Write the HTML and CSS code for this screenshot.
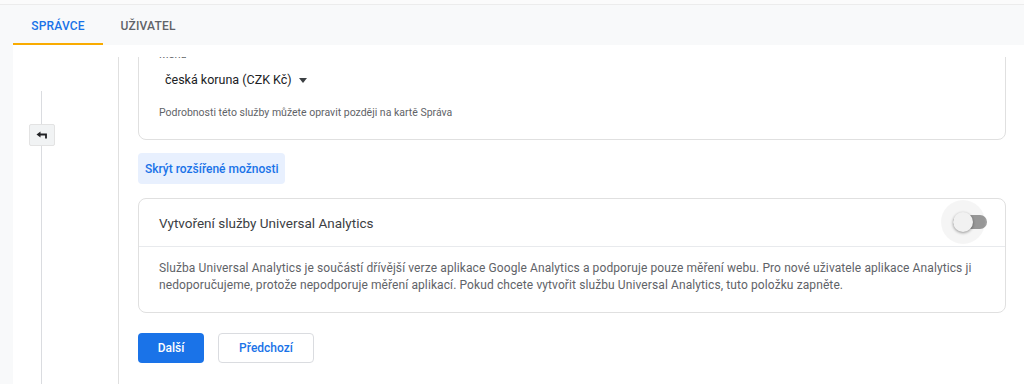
FILE: index.html
```html
<!DOCTYPE html>
<html lang="cs">
<head>
    <meta charset="UTF-8">
    <meta name="viewport" content="width=device-width, initial-scale=1.0">
    <title>Správce</title>
    <link rel="icon" href="data:,">
    <link rel="stylesheet" href="styles.css">
</head>
<body>
    <div class="topline"></div>
    <div class="tabs">
        <div class="tab active">SPRÁVCE</div>
        <div class="tab">UŽIVATEL</div>
    </div>
    <div class="panel">
        <div class="steps">
            <div class="step-line short"></div>
            <button class="back-btn" title="Zpět">
                <svg width="12" height="9" viewBox="0 0 12 9">
                    <path d="M4.5 0.5 L0.5 3.5 L4.5 6.5 Z" fill="#202124"/>
                    <path d="M3 3.5 H10 V7.5" fill="none" stroke="#202124" stroke-width="1.8"/>
                </svg>
            </button>
            <div class="step-line"></div>
        </div>
        <div class="content">
            <div class="card card-top">
                <div class="field-label">Měna</div>
                <div class="select">česká koruna (CZK Kč) <span class="caret"></span></div>
                <div class="hint">Podrobnosti této služby můžete opravit později na kartě Správa</div>
            </div>
            <button class="btn-tonal">Skrýt rozšířené možnosti</button>
            <div class="card card-ua">
                <div class="card-head">
                    <span>Vytvoření služby Universal Analytics</span>
                    <div class="toggle">
                        <div class="track"></div>
                        <div class="halo"></div>
                        <div class="thumb"></div>
                    </div>
                </div>
                <div class="card-body">
                    Služba Universal Analytics je součástí dřívější verze aplikace Google Analytics a podporuje pouze měření webu. Pro nové uživatele aplikace Analytics ji nedoporučujeme, protože nepodporuje měření aplikací. Pokud chcete vytvořit službu Universal Analytics, tuto položku zapněte.
                </div>
            </div>
            <div class="actions">
                <button class="btn-primary">Další</button>
                <button class="btn-outline">Předchozí</button>
            </div>
        </div>
    </div>
</body>
</html>
```
FILE: styles.css
```css
body {
    margin: 0;
    font-family: Roboto, "Noto Sans", Arial, sans-serif;
    background-color: #f8f9fa;
    color: #3c4043;
    height: 384px;
    overflow: hidden;
    display: flex;
    flex-direction: column;
}
.topline {
    height: 4px;
    background-color: #fbfbfb;
    border-bottom: 1px solid #ececec;
}
.tabs {
    display: flex;
    padding-left: 13px;
    height: 40px;
}
.tab {
    width: 90px;
    display: flex;
    align-items: center;
    justify-content: center;
    font-size: 12px;
    font-weight: 500;
    color: #5f6368;
    letter-spacing: 0.2px;
    box-sizing: border-box;
    border-bottom: 2px solid transparent;
    padding-top: 4px;
}
.tab.active {
    color: #1a73e8;
    border-bottom-color: #f9ab00;
}
.panel {
    flex: 1;
    margin-left: 13px;
    background-color: #fff;
    display: flex;
    min-height: 0;
}
.steps {
    width: 105px;
    display: flex;
    flex-direction: column;
    align-items: flex-start;
    padding-top: 46px;
    padding-left: 16px;
    box-sizing: border-box;
}
.step-line {
    width: 1px;
    background-color: #dadce0;
    margin-left: 12px;
    flex: 1;
}
.step-line.short {
    flex: none;
    height: 33px;
}
.back-btn {
    width: 26px;
    height: 22px;
    padding: 0;
    border: 1px solid #e3e3e3;
    border-radius: 2px;
    background-color: #f1f3f4;
    display: flex;
    align-items: center;
    justify-content: center;
}
.content {
    flex: 1;
    margin-top: 12px;
    border-left: 1px solid #e0e0e0;
    padding: 0 18px 0 19px;
    overflow: hidden;
}
.card {
    border: 1px solid #e0e0e0;
    border-radius: 8px;
    background-color: #fff;
}
.card-top {
    margin-top: -30px;
    padding: 20px 20px 18px;
}
.field-label {
    font-size: 11px;
    line-height: 14px;
    color: #5f6368;
}
.select {
    font-size: 12.5px;
    line-height: 20px;
    margin-top: 8px;
    padding-left: 6px;
    color: #202124;
    display: flex;
    align-items: center;
    gap: 7px;
}
.caret {
    width: 0;
    height: 0;
    border-left: 4.5px solid transparent;
    border-right: 4.5px solid transparent;
    border-top: 5px solid #3c4043;
}
.hint {
    font-size: 10.5px;
    line-height: 16px;
    margin-top: 15px;
    color: #5f6368;
}
.btn-tonal {
    margin-top: 13px;
    height: 31px;
    padding: 0 7px;
    border: none;
    border-radius: 4px;
    background-color: #e8f0fe;
    color: #1a73e8;
    font-family: Roboto, Arial, sans-serif;
    font-size: 12px;
    font-weight: 500;
    display: block;
}
.card-ua {
    margin-top: 14px;
}
.card-head {
    height: 47px;
    display: flex;
    align-items: center;
    justify-content: space-between;
    padding: 0 18px 0 20px;
    border-bottom: 1px solid #e8eaed;
    font-size: 13.5px;
    color: #3c4043;
}
.toggle {
    position: relative;
    width: 34px;
    height: 20px;
    margin-top: -2px;
}
.track {
    position: absolute;
    left: 0;
    top: 3px;
    width: 34px;
    height: 14px;
    border-radius: 7px;
    background-color: #9e9e9e;
}
.halo {
    position: absolute;
    left: -12px;
    top: -12px;
    width: 44px;
    height: 44px;
    border-radius: 50%;
    background-color: rgba(0, 0, 0, 0.04);
}
.thumb {
    position: absolute;
    left: 0;
    top: 0;
    width: 20px;
    height: 20px;
    border-radius: 50%;
    background-color: #f1f1f1;
    box-shadow: 0 1px 3px rgba(0, 0, 0, 0.4);
}
.card-body {
    padding: 13px 20px 18px;
    font-size: 12px;
    line-height: 17px;
    letter-spacing: 0.1px;
    color: #5f6368;
}
.actions {
    display: flex;
    gap: 14px;
    margin-top: 20px;
}
.actions button {
    height: 30px;
    border-radius: 4px;
    font-family: Roboto, Arial, sans-serif;
    font-size: 12px;
    font-weight: 500;
}
.btn-primary {
    width: 66px;
    border: none;
    background-color: #1a73e8;
    color: #fff;
}
.btn-outline {
    width: 96px;
    border: 1px solid #dadce0;
    background-color: #fff;
    color: #1a73e8;
}
```
